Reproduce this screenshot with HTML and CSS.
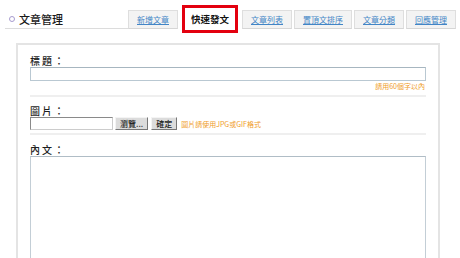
FILE: index.html
```html
<!DOCTYPE html>
<html lang="zh-Hant">
<head>
<meta charset="utf-8">
<link rel="stylesheet" href="styles.css">
</head>
<body>
<div class="page">
  <div class="head">
    <div class="title"><span class="dot"></span>文章管理</div>
    <ul class="tabs">
      <li class="tab"><a href="#">新增文章</a></li>
      <li class="tab active">快速發文</li>
      <li class="tab"><a href="#">文章列表</a></li>
      <li class="tab"><a href="#">置頂文排序</a></li>
      <li class="tab"><a href="#">文章分類</a></li>
      <li class="tab"><a href="#">回應管理</a></li>
    </ul>
  </div>
  <div class="panel">
    <div class="row row-title">
      <div class="label">標題：</div>
      <input class="text" type="text">
      <div class="hint">請用60個字以內</div>
    </div>
    <div class="row row-pic">
      <div class="label">圖片：</div>
      <div class="file">
        <span class="filebox"></span>
        <span class="btn">瀏覽...</span>
        <span class="btn">確定</span>
        <span class="note">圖片請使用JPG或GIF格式</span>
      </div>
    </div>
    <div class="row row-body">
      <div class="label">內文：</div>
      <textarea class="area"></textarea>
    </div>
  </div>
</div>
</body>
</html>
```
FILE: styles.css
```css
* { box-sizing: border-box; }
html, body { margin: 0; padding: 0; background: #fff; }
body {
  font-family: "Noto Sans CJK TC", "Noto Sans", sans-serif;
  color: #222;
}
.page { width: 460px; height: 258px; overflow: hidden; }

.head { display: flex; height: 34px; }
.title {
  margin-left: 5px;
  width: 123px;
  height: 29px;
  border-bottom: 1px solid #dcdcdc;
  display: flex;
  align-items: center;
  padding-top: 10px;
  padding-left: 4px;
  font-size: 11px;
  font-weight: 500;
  color: #1a1a1a;
}
.dot {
  width: 6px; height: 6px;
  border: 1.5px solid #a79bcf;
  border-radius: 50%;
  margin-right: 4px;
}
.tabs {
  list-style: none;
  margin: 0; padding: 0;
  display: flex;
  align-items: flex-start;
  gap: 2px;
}
.tab {
  margin-top: 10px;
  height: 19px;
  padding: 0 8px;
  background: #f3f3f3;
  border: 1px solid #dedede;
  border-bottom-color: #d6d6d6;
  display: flex;
  align-items: center;
  font-size: 8px;
}
.tab a { color: #4285c6; text-decoration: underline; }
.tab.active {
  margin: 5px 2px 0;
  height: 28px;
  padding: 0 6px;
  background: #fff;
  border: 3px solid #e3000f;
  font-size: 9.5px;
  font-weight: 700;
  color: #111;
}

.panel {
  margin: 9px 0 0 16px;
  width: 424px;
  height: 230px;
  border: 2px solid #e4e4e4;
  padding: 0 12px;
}
.row { border-bottom: 2px solid #efefef; }
.label {
  font-size: 10px;
  line-height: 12px;
  letter-spacing: 2px;
  font-weight: 500;
  color: #1e1e1e;
}
.row-title { padding: 10px 0 4px; }
.text {
  display: block;
  width: 396px;
  height: 14px;
  margin: 0;
  border: 1px solid #b9c8d2;
  border-top-color: #a7b6c0;
  padding: 0;
}
.hint {
  text-align: right;
  font-size: 7px;
  line-height: 9px;
  margin-top: 1px;
  padding-right: 1px;
  color: #ef9d2a;
}
.row-pic { padding: 8px 0 3px; }
.file { display: flex; align-items: center; height: 13px; }
.filebox {
  width: 83px; height: 13px;
  border: 1px solid #8a8a8a;
  border-right-color: #ccc;
  border-bottom-color: #ccc;
  background: #fff;
}
.btn {
  margin-left: 2px;
  height: 13px;
  padding: 0 4px;
  background: #dcdcdc;
  border: 1px solid #f4f4f4;
  border-right-color: #777;
  border-bottom-color: #777;
  font-size: 8px;
  line-height: 11px;
  color: #222;
  font-weight: 500;
}
.btn + .btn { margin-left: 3px; }
.note {
  margin-left: 4px;
  font-size: 7px;
  color: #ef9d2a;
}
.row-body { padding: 9px 0 0; border-bottom: 0; }
.area {
  display: block;
  width: 396px;
  height: 120px;
  margin: 0;
  border: 1px solid #c3ced6;
  border-top-color: #b0bdc6;
  resize: none;
}
```
